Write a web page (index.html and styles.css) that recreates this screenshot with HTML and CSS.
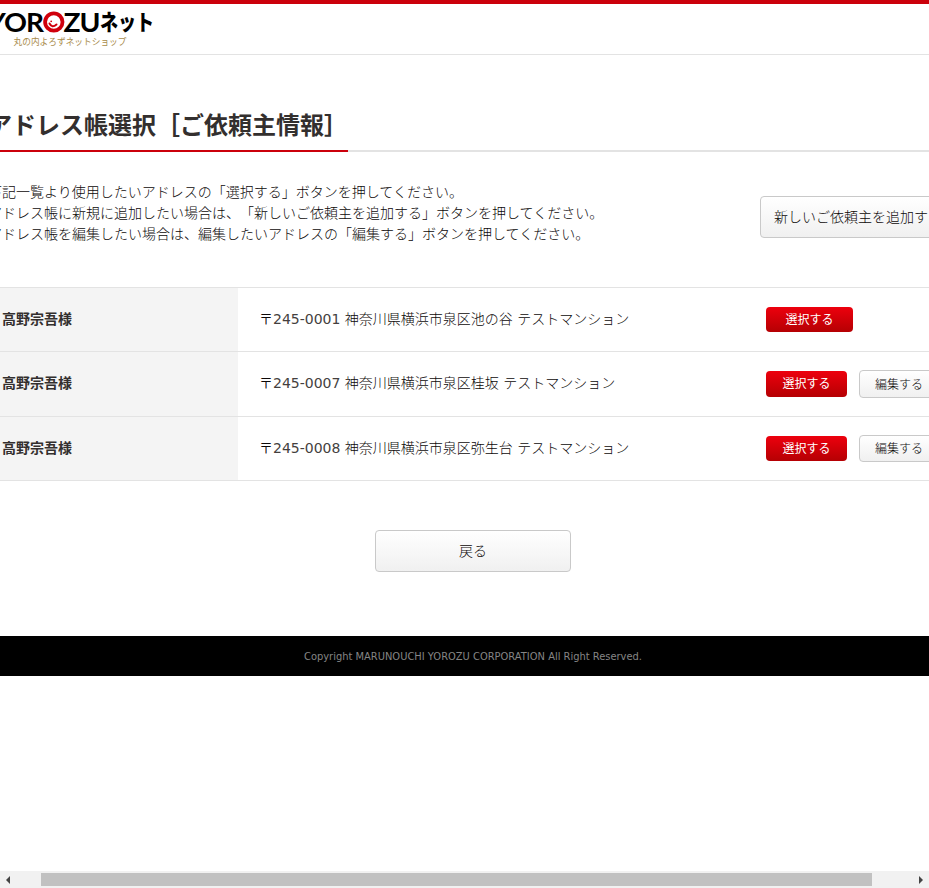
FILE: index.html
```html
<!DOCTYPE html>
<html lang="ja">
<head>
<meta charset="utf-8">
<title>アドレス帳選択</title>
<link rel="stylesheet" href="styles.css">
</head>
<body>
<div class="page">
  <header class="header">
    <svg class="logo" width="170" height="50" viewBox="-10 0 170 50">
      <g class="logo-latin">
        <text x="-12" y="31.5">Y</text>
        <text x="4" y="31.5" textLength="23" lengthAdjust="spacingAndGlyphs">O</text>
        <text x="26" y="31.5" textLength="18" lengthAdjust="spacingAndGlyphs">R</text>
        <text x="63.5" y="31.5" textLength="17" lengthAdjust="spacingAndGlyphs">Z</text>
        <text x="79.5" y="31.5" textLength="21" lengthAdjust="spacingAndGlyphs">U</text>
      </g>
      <circle cx="53.8" cy="22" r="8.7" fill="#fff" stroke="#d0000c" stroke-width="3.8"/>
      <path d="M49.5 23.5Q52 28.5 56.5 24.5" fill="none" stroke="#d0000c" stroke-width="2" stroke-linecap="round"/>
      <circle cx="51.2" cy="21.3" r=".9" fill="#d0000c"/>
      <text class="logo-kana" x="100" y="30" textLength="54" lengthAdjust="spacingAndGlyphs">ネット</text>
      <text class="logo-sub" x="13.5" y="45" textLength="113" lengthAdjust="spacingAndGlyphs">丸の内よろずネットショップ</text>
    </svg>
  </header>
  <main class="main">
    <div class="heading"><h1>アドレス帳選択［ご依頼主情報］</h1></div>
    <div class="intro">
      <p>下記一覧より使用したいアドレスの「選択する」ボタンを押してください。<br>アドレス帳に新規に追加したい場合は、「新しいご依頼主を追加する」ボタンを押してください。<br>アドレス帳を編集したい場合は、編集したいアドレスの「編集する」ボタンを押してください。</p>
      <a class="button add">新しいご依頼主を追加する</a>
    </div>
    <div class="list">
      <div class="row">
        <div class="name">高野宗吾様</div>
        <div class="address">〒<span class="zip">245-0001</span> 神奈川県横浜市泉区池の谷 テストマンション</div>
        <div class="actions"><a class="select wide">選択する</a></div>
      </div>
      <div class="row tall">
        <div class="name">高野宗吾様</div>
        <div class="address">〒<span class="zip">245-0007</span> 神奈川県横浜市泉区桂坂 テストマンション</div>
        <div class="actions"><a class="select">選択する</a><a class="button edit">編集する</a></div>
      </div>
      <div class="row">
        <div class="name">高野宗吾様</div>
        <div class="address">〒<span class="zip">245-0008</span> 神奈川県横浜市泉区弥生台 テストマンション</div>
        <div class="actions"><a class="select short">選択する</a><a class="button edit short-edit">編集する</a></div>
      </div>
    </div>
    <a class="button back">戻る</a>
  </main>
  <footer class="footer"><svg width="340" height="20"><text x="1" y="14" textLength="338" lengthAdjust="spacingAndGlyphs">Copyright MARUNOUCHI YOROZU CORPORATION All Right Reserved.</text></svg></footer>
</div>
<div class="scrollbar">
  <svg width="17" height="17"><path d="M10 5v8L6 9z"/></svg>
  <div class="track"><div class="thumb"></div></div>
  <svg width="17" height="17"><path d="M7 5v8l4-4z"/></svg>
</div>
</body>
</html>
```
FILE: styles.css
```css
* { box-sizing: border-box; }
body {
  margin: 0;
  height: 888px;
  overflow: hidden;
  display: flex;
  flex-direction: column;
  background: #fff;
  color: #0c0808;
  font: 300 14px/21px "DejaVu Sans", "Noto Sans CJK JP", sans-serif;
  text-spacing-trim: space-all;
}
.page { width: 1000px; margin-left: -27px; }
.header {
  height: 55px;
  border-top: 4px solid #cb000b;
  border-bottom: 1px solid #e3e3e3;
  padding-left: 17px;
}
.logo { display: block; margin-top: -4px; }
.logo-latin { font: bold 27.5px Lato, sans-serif; fill: #000; }
.logo-kana { font: 900 22px "Noto Sans CJK JP", sans-serif; fill: #000; }
.logo-sub { font: 9px "Noto Sans CJK JP", sans-serif; fill: #a98b4b; }
.main { width: 970px; margin: 0 auto; }
.heading {
  margin-top: 50px;
  height: 47px;
  border-bottom: 2px solid #e3e3e3;
}
h1 {
  display: inline-block;
  height: 47px;
  margin: 0;
  border-bottom: 2px solid #cb000b;
  color: #332f2e;
  font: bold 24px/37px "Noto Sans CJK JP", sans-serif;
  white-space: nowrap;
}
.intro {
  display: flex;
  justify-content: space-between;
  align-items: center;
  height: 63px;
  margin-top: 29px;
}
.intro p {
  margin: 0;
  font-family: "Noto Sans CJK JP", sans-serif;
  white-space: nowrap;
}
.button {
  display: flex;
  justify-content: center;
  align-items: center;
  padding-bottom: 2px;
  border: 1px solid #c9c9c9;
  border-radius: 4px;
  background: linear-gradient(#fff, #f0f0f0);
  font-family: "Noto Sans CJK JP", sans-serif;
  white-space: nowrap;
}
.add { width: 198px; height: 42px; margin-top: 9px; padding-right: 2px; }
.list { margin-top: 43px; border-top: 1px solid #e3e3e3; }
.row {
  display: grid;
  grid-template-columns: 250px 528px 1fr;
  height: 64px;
  border-bottom: 1px solid #e3e3e3;
}
.tall { height: 65px; }
.name {
  padding: 20px 14px;
  background: #f4f4f4;
  color: #332f2e;
  font-family: "Noto Sans CJK JP", sans-serif;
  font-weight: bold;
}
.address { padding: 21px 21px 20px; white-space: nowrap; }
.zip { color: #443f3e; font-weight: 400; }
.actions { display: flex; align-items: center; gap: 12px; }
.select {
  display: flex;
  justify-content: center;
  align-items: center;
  width: 81px;
  height: 26px;
  padding-bottom: 2px;
  border-radius: 4px;
  background: linear-gradient(#ed000d, #b50003);
  color: #fff;
  font: 400 12px/18px "Noto Sans CJK JP", sans-serif;
}
.wide { width: 87px; height: 25px; }
.short { height: 25px; }
.edit { width: 82px; height: 28px; padding-right: 2px; font-size: 12px; }
.short-edit { height: 27px; }
.back { width: 196px; height: 42px; margin: 49px auto 64px; }
.footer {
  display: flex;
  justify-content: center;
  align-items: center;
  height: 40px;
  background: #000;
}
.footer text { font: 10px "DejaVu Sans", sans-serif; fill: #858585; }
.scrollbar {
  display: flex;
  height: 17px;
  margin-top: auto;
  background: #f1f1f1;
}
.scrollbar path { fill: #444; }
.track { flex: 1; padding: 2px 40px 2px 24px; }
.thumb { height: 13px; background: #c1c1c1; }
```
